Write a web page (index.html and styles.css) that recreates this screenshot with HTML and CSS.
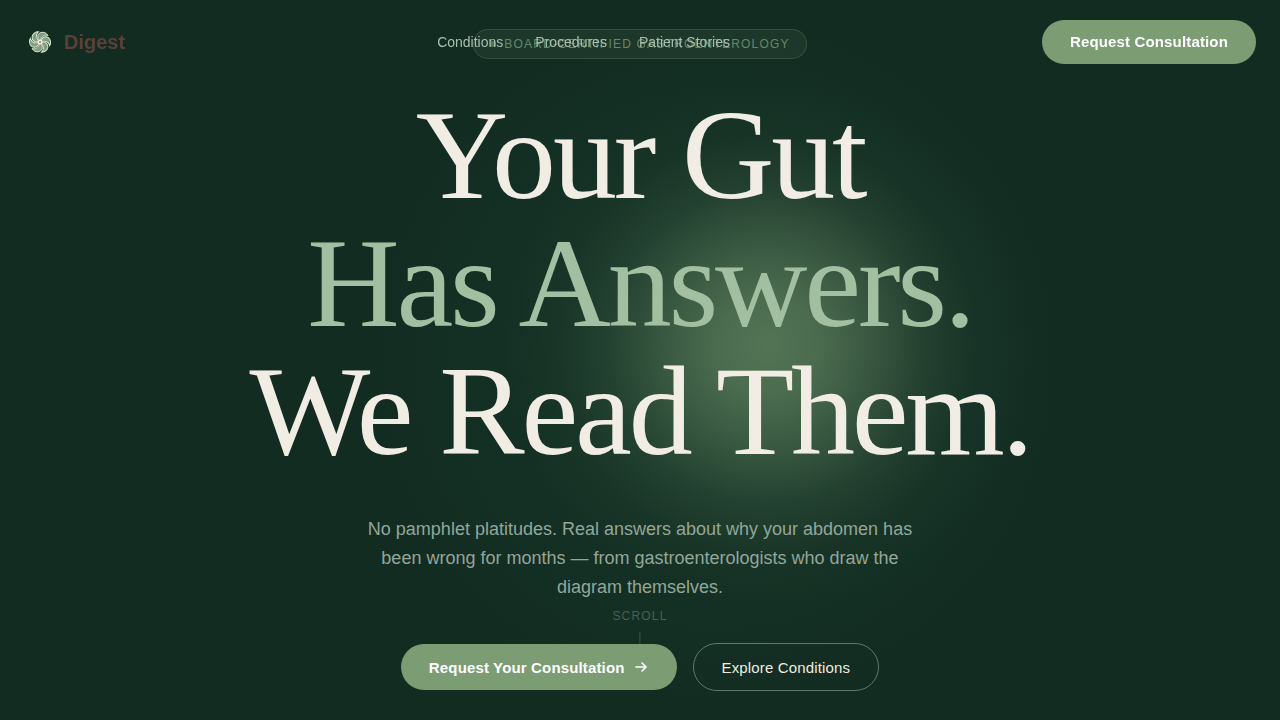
FILE: index.html
```html
<!DOCTYPE html>
<html lang="en">
<head>
<meta charset="utf-8">
<meta name="viewport" content="width=device-width, initial-scale=1">
<title>Digest</title>
<link rel="stylesheet" href="styles.css">
</head>
<body>
<header class="nav">
  <a class="brand" href="#">
    <svg class="brand-mark" viewBox="0 0 32 32" aria-hidden="true">
      <defs>
        <g id="blade">
          <path d="M16 15C12.800 12 13 8.500 16.500 6.500C20 5.600 22.500 7 24 9.500C21 8.500 17.500 10 16 15Z" fill="#7f9f80" stroke="#e6ecd9" stroke-width=".9"/>
        </g>
      </defs>
      <circle cx="16" cy="16" r="9.800" fill="#1d3d2c"/>
      <use href="#blade"/>
      <use href="#blade" transform="rotate(60 16 16)"/>
      <use href="#blade" transform="rotate(120 16 16)"/>
      <use href="#blade" transform="rotate(180 16 16)"/>
      <use href="#blade" transform="rotate(240 16 16)"/>
      <use href="#blade" transform="rotate(300 16 16)"/>
      <circle cx="16" cy="16" r="2.400" fill="#f3ece2"/>
      <circle cx="16" cy="16" r="1" fill="#b5705f"/>
    </svg>
    <span>Digest</span>
  </a>
  <nav class="links" aria-label="Main">
    <a href="#conditions">Conditions</a>
    <a href="#procedures">Procedures</a>
    <a href="#stories">Patient Stories</a>
  </nav>
  <button class="btn btn-solid btn-nav" type="button">Request Consultation</button>
</header>
<main class="hero">
  <div class="badge"><span class="dot"></span>Board-Certified Gastroenterology</div>
  <h1 class="title">Your Gut<br><span class="accent">Has Answers.</span><br>We Read Them.</h1>
  <p class="lead">No pamphlet platitudes. Real answers about why your abdomen has been wrong for months — from gastroenterologists who draw the diagram themselves.</p>
  <div class="actions">
    <button class="btn btn-solid" type="button">Request Your Consultation
      <svg class="arrow" viewBox="0 0 16 16" aria-hidden="true"><path d="M3 8h10M9 4l4 4-4 4"/></svg>
    </button>
    <button class="btn btn-outline" type="button">Explore Conditions</button>
  </div>
  <div class="scroll"><span>Scroll</span><span class="scroll-line"></span></div>
</main>
</body>
</html>
```
FILE: styles.css
```css
* { box-sizing: border-box; }

body {
  margin: 0;
  background: #132c22;
  color: #f1ede5;
  font-family: "Liberation Sans", Arial, sans-serif;
}

a { color: inherit; text-decoration: none; }

.nav {
  position: fixed;
  top: 0;
  left: 0;
  right: 0;
  z-index: 10;
  display: flex;
  align-items: center;
  justify-content: space-between;
  padding: 20px 24px;
}

.brand {
  display: flex;
  align-items: center;
  gap: 8px;
  color: #5b4037;
  font-size: 20px;
  font-weight: 700;
}

.brand-mark { width: 32px; height: 32px; }

.links {
  display: flex;
  gap: 32px;
  color: #a9bfae;
  font-size: 14px;
}

.hero {
  position: relative;
  isolation: isolate;
  min-height: 100vh;
  display: flex;
  flex-direction: column;
  align-items: center;
  justify-content: center;
  padding: 24px;
  text-align: center;
  background:
    radial-gradient(circle at 60% 48%, rgba(122, 155, 114, 0.62) 0, rgba(122, 155, 114, 0.54) 50px, rgba(122, 155, 114, 0.35) 105px, rgba(122, 155, 114, 0.14) 160px, rgba(122, 155, 114, 0.04) 210px, transparent 265px),
    radial-gradient(circle at 56% 50%, rgba(26, 72, 48, 0.35) 0, transparent 360px);
}

.badge {
  display: flex;
  align-items: center;
  gap: 8px;
  height: 30px;
  margin-bottom: 32px;
  padding: 0 16px;
  border: 1px solid rgba(122, 155, 114, 0.26);
  border-radius: 15px;
  background: rgba(122, 155, 114, 0.1);
  color: #66876a;
  font-size: 12px;
  letter-spacing: 0.1em;
  text-transform: uppercase;
}

.dot {
  width: 6px;
  height: 6px;
  border-radius: 50%;
  background: #56784f;
}

.title {
  margin: 0 0 40px;
  font-family: "Liberation Serif", "Times New Roman", serif;
  font-size: 128px;
  font-weight: 400;
  line-height: 128px;
  letter-spacing: -0.025em;
}

.accent { color: #a3bfa2; }

.lead {
  max-width: 560px;
  margin: 0 0 41px;
  color: #93a699;
  font-size: 18px;
  line-height: 29px;
}

.actions {
  display: flex;
  align-items: center;
  gap: 16px;
}

.btn {
  display: inline-flex;
  align-items: center;
  gap: 8px;
  padding: 0 28px;
  border: 0;
  border-radius: 24px;
  font-family: inherit;
  font-size: 15px;
  letter-spacing: 0.01em;
  cursor: pointer;
}

.btn-solid {
  height: 46px;
  background: #7c9c74;
  color: #fff;
  font-weight: 700;
}

.btn-nav {
  height: 44px;
  padding-bottom: 2px;
}

.btn-outline {
  height: 48px;
  border: 1px solid #60776a;
  background: transparent;
  color: #eeebe3;
}

.arrow {
  width: 16px;
  height: 16px;
  fill: none;
  stroke: currentColor;
  stroke-width: 1.6;
  stroke-linecap: round;
  stroke-linejoin: round;
}

.scroll {
  position: absolute;
  bottom: 40px;
  left: 50%;
  z-index: -1;
  display: flex;
  flex-direction: column;
  align-items: center;
  gap: 8px;
  transform: translateX(-50%);
  color: #466052;
  font-size: 12px;
  line-height: 16px;
  letter-spacing: 0.1em;
  text-transform: uppercase;
}

.scroll-line {
  width: 1px;
  height: 48px;
  background: linear-gradient(#3f5c4c, transparent);
}
```
